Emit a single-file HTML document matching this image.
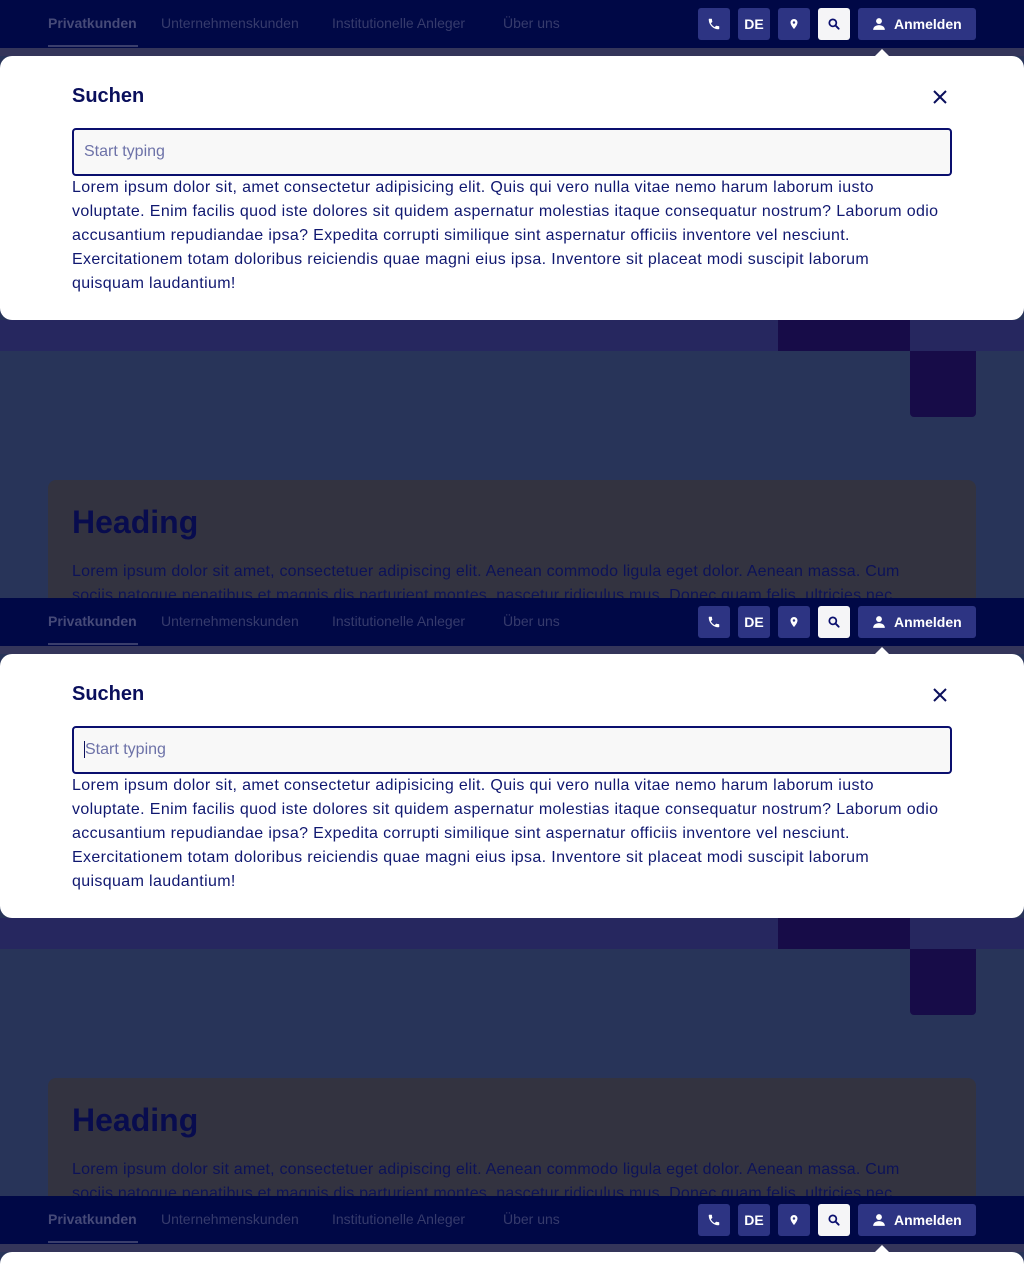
<!DOCTYPE html>
<html style="width:1024px;height:1280px;overflow:hidden"><head><meta charset="utf-8"><style>
*{margin:0;padding:0;box-sizing:border-box}
body{width:1024px;height:1280px;overflow:hidden;background:#283459;font-family:"Liberation Sans",sans-serif;position:relative}
.sec{position:absolute;left:0;width:1024px;height:598px;overflow:hidden;background:#283459}
.nav{position:absolute;left:0;top:0;width:1024px;height:48px;background:#000846}
.nav .l{position:absolute;top:15px;font-size:14px;color:#363b6c;white-space:nowrap}
.nav .l.b{font-weight:bold;color:#464a78}
.ul{position:absolute;left:48px;top:45px;width:90px;height:2px;background:#3a3e6c}
.btn{position:absolute;top:8px;height:32px;width:32px;background:#2d3483;border-radius:3px;color:#fff;font-weight:bold;font-size:14px;display:flex;align-items:center;justify-content:center}
.strip{position:absolute;top:48px;left:0;width:1024px;height:8px;background:#34355a}
.modal{position:absolute;top:56px;left:0;width:1024px;height:264px;background:#fff;border-radius:12px}
.tri{position:absolute;left:875px;top:49px;width:0;height:0;border-left:7px solid transparent;border-right:7px solid transparent;border-bottom:7px solid #fff}
.modal h2{position:absolute;left:72px;top:29px;font-size:20px;color:#0a0f5c;font-weight:bold}
.x{position:absolute;left:932px;top:33px}
.inp{position:absolute;left:72px;top:72px;width:880px;height:48px;border:2px solid #0a0f6e;border-radius:4px;background:#f8f8f8;font-size:16px;color:#6d72a8;padding:13px 10px}
.txt{position:absolute;left:72px;top:120px;width:900px;font-size:16px;line-height:24px;color:#101870;white-space:nowrap;letter-spacing:0.36px}
.band{position:absolute;top:320px;left:0;width:1024px;height:31px;background:#26275f}
.d1{position:absolute;top:320px;left:778px;width:132px;height:31px;background:#170c48}
.d2{position:absolute;top:351px;left:910px;width:66px;height:66px;background:#170c48;border-radius:0 0 4px 4px}
.card{position:absolute;left:48px;top:480px;width:928px;height:200px;background:#333340;border-radius:8px}
.card h1{position:absolute;left:24px;top:24px;font-size:32px;color:#080c4e;font-weight:bold}
.card p{position:absolute;left:24px;top:80px;font-size:16px;line-height:24px;color:#0c1258;white-space:nowrap;letter-spacing:0.2px}
</style></head><body>

<div class="sec" style="top:0">
<div class="card"><h1>Heading</h1><p>Lorem ipsum dolor sit amet, consectetuer adipiscing elit. Aenean commodo ligula eget dolor. Aenean massa. Cum<br>sociis natoque penatibus et magnis dis parturient montes, nascetur ridiculus mus. Donec quam felis, ultricies nec</p></div>
<div class="band"></div><div class="d1"></div><div class="d2"></div>
<div class="nav">
<span class="l b" style="left:48px">Privatkunden</span>
<span class="l" style="left:161px">Unternehmenskunden</span>
<span class="l" style="left:332px">Institutionelle Anleger</span>
<span class="l" style="left:503px">Über uns</span>
<div class="ul"></div>
<div class="btn" style="left:698px"><svg width="14" height="14" viewBox="0 0 24 24"><path fill="#fff" d="M6.6 10.8c1.4 2.8 3.8 5.1 6.6 6.6l2.2-2.2c.3-.3.7-.4 1-.2 1.1.4 2.3.6 3.6.6.6 0 1 .4 1 1V20c0 .6-.4 1-1 1C10.6 21 3 13.4 3 4c0-.6.4-1 1-1h3.5c.6 0 1 .4 1 1 0 1.3.2 2.5.6 3.6.1.3 0 .7-.2 1z"/></svg></div>
<div class="btn" style="left:738px">DE</div>
<div class="btn" style="left:778px"><svg width="12" height="14" viewBox="0 0 24 24"><path fill="#fff" d="M12 2C8.1 2 5 5.1 5 9c0 5.2 7 13 7 13s7-7.8 7-13c0-3.9-3.1-7-7-7zm0 9.5a2.5 2.5 0 110-5 2.5 2.5 0 010 5z"/></svg></div>
<div class="btn" style="left:818px;background:#f5f5f7"><svg width="14" height="14" viewBox="0 0 24 24"><circle cx="10" cy="10" r="6" fill="none" stroke="#0a0f6e" stroke-width="3"/><path d="M14.5 14.5L20 20" stroke="#0a0f6e" stroke-width="3.2" stroke-linecap="round"/></svg></div>
<div class="btn" style="left:858px;width:118px;justify-content:flex-start;padding-left:14px"><svg width="14" height="14" viewBox="0 0 24 24" style="margin-right:8px"><circle cx="12" cy="7" r="5" fill="#fff"/><path fill="#fff" d="M2 22c0-5 4.5-8 10-8s10 3 10 8z"/></svg>Anmelden</div>
</div>
<div class="strip"></div><div class="tri"></div>
<div class="modal"><h2>Suchen</h2>
<svg class="x" width="16" height="16" viewBox="0 0 16 16"><path d="M2 2L14 14M14 2L2 14" stroke="#0a0f5c" stroke-width="2"/></svg>
<div class="inp">Start typing</div>
<div class="txt">Lorem ipsum dolor sit, amet consectetur adipisicing elit. Quis qui vero nulla vitae nemo harum laborum iusto<br>voluptate. Enim facilis quod iste dolores sit quidem aspernatur molestias itaque consequatur nostrum? Laborum odio<br>accusantium repudiandae ipsa? Expedita corrupti similique sint aspernatur officiis inventore vel nesciunt.<br>Exercitationem totam doloribus reiciendis quae magni eius ipsa. Inventore sit placeat modi suscipit laborum<br>quisquam laudantium!</div>
</div>
</div>

<div class="sec" style="top:598px">
<div class="card"><h1>Heading</h1><p>Lorem ipsum dolor sit amet, consectetuer adipiscing elit. Aenean commodo ligula eget dolor. Aenean massa. Cum<br>sociis natoque penatibus et magnis dis parturient montes, nascetur ridiculus mus. Donec quam felis, ultricies nec</p></div>
<div class="band"></div><div class="d1"></div><div class="d2"></div>
<div class="nav">
<span class="l b" style="left:48px">Privatkunden</span>
<span class="l" style="left:161px">Unternehmenskunden</span>
<span class="l" style="left:332px">Institutionelle Anleger</span>
<span class="l" style="left:503px">Über uns</span>
<div class="ul"></div>
<div class="btn" style="left:698px"><svg width="14" height="14" viewBox="0 0 24 24"><path fill="#fff" d="M6.6 10.8c1.4 2.8 3.8 5.1 6.6 6.6l2.2-2.2c.3-.3.7-.4 1-.2 1.1.4 2.3.6 3.6.6.6 0 1 .4 1 1V20c0 .6-.4 1-1 1C10.6 21 3 13.4 3 4c0-.6.4-1 1-1h3.5c.6 0 1 .4 1 1 0 1.3.2 2.5.6 3.6.1.3 0 .7-.2 1z"/></svg></div>
<div class="btn" style="left:738px">DE</div>
<div class="btn" style="left:778px"><svg width="12" height="14" viewBox="0 0 24 24"><path fill="#fff" d="M12 2C8.1 2 5 5.1 5 9c0 5.2 7 13 7 13s7-7.8 7-13c0-3.9-3.1-7-7-7zm0 9.5a2.5 2.5 0 110-5 2.5 2.5 0 010 5z"/></svg></div>
<div class="btn" style="left:818px;background:#f5f5f7"><svg width="14" height="14" viewBox="0 0 24 24"><circle cx="10" cy="10" r="6" fill="none" stroke="#0a0f6e" stroke-width="3"/><path d="M14.5 14.5L20 20" stroke="#0a0f6e" stroke-width="3.2" stroke-linecap="round"/></svg></div>
<div class="btn" style="left:858px;width:118px;justify-content:flex-start;padding-left:14px"><svg width="14" height="14" viewBox="0 0 24 24" style="margin-right:8px"><circle cx="12" cy="7" r="5" fill="#fff"/><path fill="#fff" d="M2 22c0-5 4.5-8 10-8s10 3 10 8z"/></svg>Anmelden</div>
</div>
<div class="strip"></div><div class="tri"></div>
<div class="modal"><h2>Suchen</h2>
<svg class="x" width="16" height="16" viewBox="0 0 16 16"><path d="M2 2L14 14M14 2L2 14" stroke="#0a0f5c" stroke-width="2"/></svg>
<div class="inp"><span style="border-left:1px solid #0a0f5c"></span>Start typing</div>
<div class="txt">Lorem ipsum dolor sit, amet consectetur adipisicing elit. Quis qui vero nulla vitae nemo harum laborum iusto<br>voluptate. Enim facilis quod iste dolores sit quidem aspernatur molestias itaque consequatur nostrum? Laborum odio<br>accusantium repudiandae ipsa? Expedita corrupti similique sint aspernatur officiis inventore vel nesciunt.<br>Exercitationem totam doloribus reiciendis quae magni eius ipsa. Inventore sit placeat modi suscipit laborum<br>quisquam laudantium!</div>
</div>
</div>

<div class="sec" style="top:1196px;height:84px">
<div class="nav">
<span class="l b" style="left:48px">Privatkunden</span>
<span class="l" style="left:161px">Unternehmenskunden</span>
<span class="l" style="left:332px">Institutionelle Anleger</span>
<span class="l" style="left:503px">Über uns</span>
<div class="ul"></div>
<div class="btn" style="left:698px"><svg width="14" height="14" viewBox="0 0 24 24"><path fill="#fff" d="M6.6 10.8c1.4 2.8 3.8 5.1 6.6 6.6l2.2-2.2c.3-.3.7-.4 1-.2 1.1.4 2.3.6 3.6.6.6 0 1 .4 1 1V20c0 .6-.4 1-1 1C10.6 21 3 13.4 3 4c0-.6.4-1 1-1h3.5c.6 0 1 .4 1 1 0 1.3.2 2.5.6 3.6.1.3 0 .7-.2 1z"/></svg></div>
<div class="btn" style="left:738px">DE</div>
<div class="btn" style="left:778px"><svg width="12" height="14" viewBox="0 0 24 24"><path fill="#fff" d="M12 2C8.1 2 5 5.1 5 9c0 5.2 7 13 7 13s7-7.8 7-13c0-3.9-3.1-7-7-7zm0 9.5a2.5 2.5 0 110-5 2.5 2.5 0 010 5z"/></svg></div>
<div class="btn" style="left:818px;background:#f5f5f7"><svg width="14" height="14" viewBox="0 0 24 24"><circle cx="10" cy="10" r="6" fill="none" stroke="#0a0f6e" stroke-width="3"/><path d="M14.5 14.5L20 20" stroke="#0a0f6e" stroke-width="3.2" stroke-linecap="round"/></svg></div>
<div class="btn" style="left:858px;width:118px;justify-content:flex-start;padding-left:14px"><svg width="14" height="14" viewBox="0 0 24 24" style="margin-right:8px"><circle cx="12" cy="7" r="5" fill="#fff"/><path fill="#fff" d="M2 22c0-5 4.5-8 10-8s10 3 10 8z"/></svg>Anmelden</div>
</div>
<div class="strip"></div><div class="tri"></div>
<div class="modal"></div>
</div>

</body></html>
